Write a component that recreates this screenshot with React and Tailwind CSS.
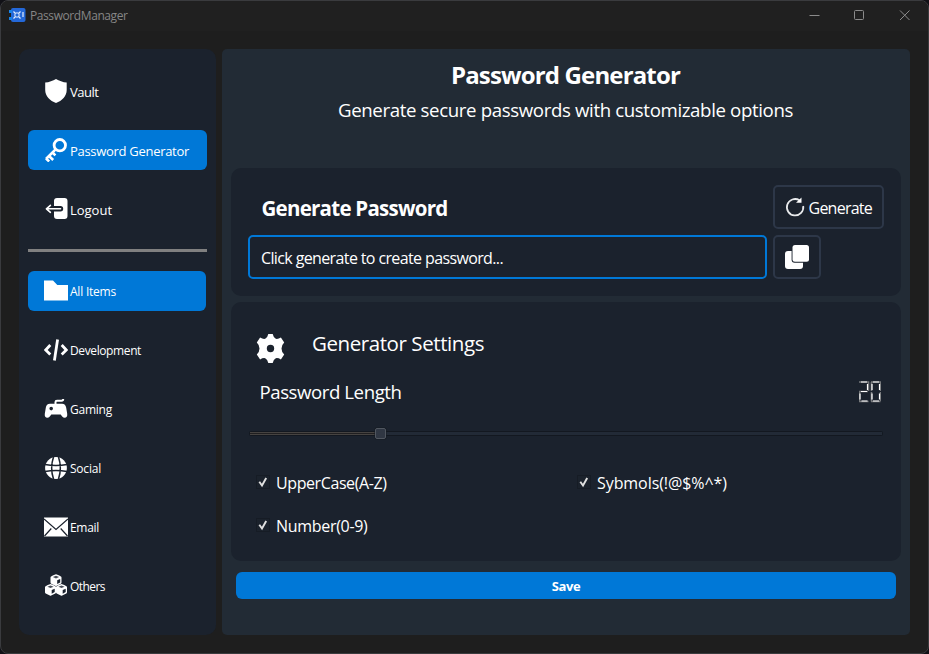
import { useLayoutEffect, useRef, useState } from "react";

// Text that spreads its letter spacing so the line fills a fixed width.
function Fit({ w, className = "", children }) {
  const ref = useRef(null);
  const [ls, setLs] = useState(0);
  useLayoutEffect(() => {
    const el = ref.current;
    const n = el.textContent.length;
    el.style.letterSpacing = "0px";
    const v = (w - el.getBoundingClientRect().width) / n;
    el.style.letterSpacing = v + "px";
    setLs(v);
  }, [w]);
  return (
    <span ref={ref} style={{ letterSpacing: ls + "px" }} className={"inline-block shrink-0 whitespace-pre " + className}>
      {children}
    </span>
  );
}

const Svg = ({ children, className = "size-6", box = "0 0 24 24" }) => (
  <svg viewBox={box} className={"shrink-0 " + className} fill="white">{children}</svg>
);

const Shield = () => (
  <Svg><path d="M12 0C15 1.900 19 3.200 22.700 3.600V11c0 6-4.700 10.800-10.700 13C6 21.800 1.200 17 1.200 11V3.600C5 3.200 9 1.900 12 0z" /></Svg>
);
const Key = () => (
  <Svg>
    <circle cx="15.800" cy="7.200" r="5.700" fill="none" stroke="white" strokeWidth="2.800" />
    <path d="M11.800 11.200L2 21M5 18l4.200 4M2 20.600l3.200 2.800M8.700 14.800l2.700 2.600" fill="none" stroke="white" strokeWidth="2.600" />
  </Svg>
);
const Logout = () => (
  <Svg>
    <path d="M13 1h7.500a3 3 0 013 3v15a3 3 0 01-3 3H13a3 3 0 01-3-3v-4.500h6.500a2.700 2.700 0 000-5.400H10V4a3 3 0 013-3z" />
    <path d="M16.500 11.800H2.600M6.400 8.300L2.400 11.800l4 3.500" fill="none" stroke="white" strokeWidth="1.600" strokeLinecap="round" strokeLinejoin="round" />
  </Svg>
);
const Folder = () => (
  <Svg><path d="M0 1.500h9L13.300 6H24v15.500H0z" /></Svg>
);
const Code = () => (
  <Svg>
    <path d="M6.300 7L1.700 12l4.600 4.500M17.700 7l4.600 5-4.600 4.500" fill="none" stroke="white" strokeWidth="2.800" />
    <path d="M13.600 1.500L10.400 22.500" stroke="white" strokeWidth="2.800" />
  </Svg>
);
const Gamepad = () => (
  <Svg>
    <path d="M11.500 7V5Q11.500 3.700 13 3.700H17.500q1.700 0 1.700-1.700" fill="none" stroke="white" strokeWidth="2" />
    <path fillRule="evenodd" d="M6 6.800h12c2.500 0 3.700 1.500 4.200 4l1 6c.4 2.500-.8 3.900-2.500 3.900-2 0-2.700-1.300-4-3.200H7.300c-1.300 1.900-2 3.200-4 3.200-1.700 0-2.900-1.400-2.500-3.900l1-6c.5-2.500 1.700-4 4.200-4zM7.200 9.800a1.800 1.800 0 100 3.600 1.800 1.800 0 000-3.600z" />
  </Svg>
);
const Globe = () => (
  <Svg>
    <circle cx="12" cy="12" r="10.900" />
    <path d="M9.500 1Q5.800 12 9.500 23M14.500 1Q18.200 12 14.500 23M1 8.500Q12 10.700 23 8.500M1 15.500Q12 13.500 23 15.500" fill="none" stroke="#1b222d" strokeWidth="1.500" />
  </Svg>
);
const Mail = () => (
  <Svg>
    <path d="M0 2.500h24v19H0z" />
    <path d="M0 4l12 10.500L24 4M.5 21l6.800-7.500M23.500 21l-6.800-7.500" fill="none" stroke="#1b222d" strokeWidth="1.200" />
  </Svg>
);
const Cube = ({ x, y }) => (
  <g transform={`translate(${x} ${y})`}>
    <path d="M5.500 0Q6 0 10 1.900 11 2.400 11 3.200V8.200Q11 9 10.300 9.400L6.200 11.500Q5.500 11.900 4.800 11.500L.7 9.400Q0 9 0 8.200V3.200Q0 2.400 1 1.900 5 0 5.500 0z" />
    <path d="M5.500 1.500L8.600 2.800 5.500 4.100 2.400 2.800z" fill="#1b222d" opacity=".8" />
    <path d="M6.700 6L9.700 4.700v3.400L6.700 9.700z" fill="#1b222d" />
  </g>
);
const Cubes = () => (
  <Svg><Cube x={6.500} y={0.300} /><Cube x={1} y={10} /><Cube x={12} y={10} /></Svg>
);
const Gear = () => (
  <Svg className="w-[29px] h-[29px]" box="0 0 29 29">
    <path fillRule="evenodd" d="M12.300 0h4.400q.8 3.800 3.100 4.800 2.200.6 5.100-1.300l3.300 5q-2.700 2.500-2.700 6t2.700 6l-3.300 5q-2.900-1.900-5.100-1.300-2.300 1-3.100 4.800h-4.400q-.8-3.800-3.100-4.800-2.200-.6-5.100 1.300l-3.300-5q2.700-2.500 2.700-6t-2.700-6l3.300-5q2.900 1.900 5.100 1.300 2.300-1 3.100-4.800zM14.500 10.800a3.700 3.700 0 100 7.400 3.700 3.700 0 000-7.400z" />
  </Svg>
);

function NavItem({ icon, label, w, active, small, className = "" }) {
  return (
    <div className={"flex h-10 items-center rounded-md pl-4 text-white " + (active ? "bg-[#0078d7] " : "") + className}>
      {icon}
      <Fit w={w} className={"ml-0.5 pt-0.5 leading-5 " + (small ? "text-[12px]" : "text-[13px]")}>{label}</Fit>
    </div>
  );
}

function Check({ label, w }) {
  return (
    <div className="flex h-5 items-center">
      <svg viewBox="0 0 14 14" className="-mt-0.5 size-3.5 shrink-0">
        <rect x=".5" y=".5" width="13" height="13" fill="#1b222c" stroke="#161c25" />
        <path d="M3.300 6.800l2.700 3.700L10.200 3" fill="none" stroke="#e0e0e0" strokeWidth="1.900" />
      </svg>
      <Fit w={w} className="ml-1.5 text-[16px] leading-5">{label}</Fit>
    </div>
  );
}

export default function App() {
  return (
    <div className="h-[654px] w-[929px] overflow-hidden bg-[#111116] font-['Open_Sans','Noto_Sans',sans-serif] text-white">
      <div className="flex h-full flex-col overflow-hidden rounded-lg border border-[#3a3b3e] bg-[#1e1e1e]">
        <header className="flex h-[30px] shrink-0 items-center bg-[#202020] pl-2 pr-[17px]">
          <svg viewBox="0 0 17 15" className="-mt-px h-[15px] w-[17px]">
            <rect x="2" y="0" width="14.500" height="14" rx="2" fill="#2468d8" />
            <path d="M0 2h3v3H0zM0 9h3v3H0z" fill="#1783ea" />
            <path d="M4.500 3.500l7 7M11.500 3.500l-7 7M14 4v5" stroke="#e4efff" strokeWidth="1.200" />
            <circle cx="8" cy="7" r="2.200" fill="#2468d8" stroke="#e4efff" />
          </svg>
          <Fit w={97.500} className="ml-1 text-[12px] leading-5 text-[#868686]">PasswordManager</Fit>
          <svg viewBox="0 0 102 12" className="-mt-0.5 ml-auto h-3 w-[102px]" fill="none" stroke="#8b8b8b">
            <path d="M.5 6.500h10M91 1.500l9.500 9.500M100.500 1.500L91 11" />
            <rect x="45.500" y="1.500" width="9" height="9" rx="1" />
          </svg>
        </header>

        <div className="flex gap-1.5 pl-[18px] pt-[18px]">
          <aside className="flex h-[586px] w-[197px] flex-col rounded-[10px] bg-[#1b222d] pl-[9px] pr-[9px] pt-[22px]">
            <nav className="flex flex-col gap-[19px]">
              <NavItem icon={<Shield />} label="Vault" w={28.500} />
              <NavItem icon={<Key />} label="Password Generator" w={119} active />
              <NavItem icon={<Logout />} label="Logout" w={42} />
            </nav>
            <div className="mb-[19px] mt-5 h-[3px] bg-[#808080]" />
            <nav className="flex flex-col gap-[19px]">
              <NavItem small icon={<Folder />} label="All Items" w={46} active className="mr-px" />
              <NavItem small icon={<Code />} label="Development" w={71} />
              <NavItem small icon={<Gamepad />} label="Gaming" w={42} />
              <NavItem small icon={<Globe />} label="Social" w={31} />
              <NavItem small icon={<Mail />} label="Email" w={29} />
              <NavItem small icon={<Cubes />} label="Others" w={35} />
            </nav>
          </aside>

          <main className="flex h-[586px] w-[688px] flex-col rounded-[5px] bg-[#222b35] px-[9px] pt-[10px]">
            <h1 className="pr-px text-center text-[24px] font-bold leading-8"><Fit w={229}>Password Generator</Fit></h1>
            <p className="mt-[5px] pr-px text-center text-[18.670px] leading-7"><Fit w={455}>Generate secure passwords with customizable options</Fit></p>

            <section className="mt-[44px] flex h-32 flex-col gap-1.5 rounded-[10px] bg-[#1b222d] px-[17px] pt-[17px]">
              <div className="flex h-11 items-center justify-between">
                <Fit w={186} className="ml-[13.500px] pt-0.5 text-[20.500px] font-bold leading-6">Generate Password</Fit>
                <button className="flex h-11 w-[111px] items-center rounded-[5px] border-2 border-[#2d3748] pl-[10px]">
                  <svg viewBox="0 0 20 20" className="size-5" fill="none">
                    <path d="M14.500 3.300A8.200 8.200 0 1018.200 9" stroke="#e8eaec" strokeWidth="1.800" />
                    <path d="M16.500.500V5.800H11z" fill="white" />
                  </svg>
                  <Fit w={63.500} className="ml-[3.500px] pt-0.5 text-[16px] leading-5">Generate</Fit>
                </button>
              </div>
              <div className="flex gap-1.5">
                <div className="flex h-11 w-[519px] items-center rounded-[5px] border-2 border-[#0078d7] pl-[11px]">
                  <Fit w={242} className="pt-0.5 text-[16px] leading-5">Click generate to create password...</Fit>
                </div>
                <button className="flex h-11 w-12 items-center justify-center rounded-[5px] border-2 border-[#2d3748]">
                  <Svg>
                    <rect x="0" y="6" width="18" height="18" rx="3" />
                    <rect x="6.600" y="-1" width="18.400" height="18.800" rx="3" fill="#1b222d" />
                    <rect x="7.500" y="0" width="16.500" height="16.800" rx="2.500" />
                  </Svg>
                </button>
              </div>
            </section>

            <section className="mt-1.5 flex h-[259px] flex-col rounded-[10px] bg-[#1b222d] pl-[18px] pr-[18px] pt-8">
              <div className="flex h-[29px] pl-[7px]">
                <Gear />
                <Fit w={172} className="ml-[27px] text-[20.500px] leading-[19px]">Generator Settings</Fit>
              </div>
              <div className="mt-[17px] flex h-6 items-center justify-between pl-[10.500px] pr-0.5">
                <Fit w={142} className="text-[18.670px] leading-6">Password Length</Fit>
                <svg viewBox="0 0 22 22" className="h-[22px] w-[22px]" fill="none">
                  <path d="M0 1h9.500v9M0 10.500h9M.5 11v9.500M0 20.500h9.500M12.500 1v9M12.500 11v9.500M21.500 1v9M21.500 11v9M12 1h10M12 20.500h9.500" stroke="#77797c" strokeWidth="1.600" />
                  <path d="M2 1h6M8.500 3v6M2 10.500h6M1 12.500v6M2.500 20h6M14 1h6M13 3v6M20.500 3v6M13 12.500v6M20.500 12.500v6M14 20h6" stroke="white" strokeWidth="1.200" />
                </svg>
              </div>
              <svg viewBox="0 0 634 13" className="mt-[23px] h-[13px] w-[634px] shrink-0">
                <rect x=".5" y="4.500" width="633" height="4" rx="1" fill="#222a36" stroke="#131820" />
                <path d="M1 5.500h126M1 7.500h126" stroke="#464341" />
                <path d="M1 6.500h126" stroke="#201f20" />
                <rect x="125.500" y=".5" width="12" height="12" rx="2" fill="#151a22" />
                <rect x="126.500" y="1.500" width="10" height="10" rx="1.500" fill="#303743" stroke="#515760" />
              </svg>
              <div className="mt-[33px] grid grid-cols-[321px_1fr] gap-y-[23px] pl-[7px]">
                <Check label="UpperCase(A-Z)" w={110.500} />
                <Check label="Sybmols(!@$%^*)" w={130} />
                <Check label="Number(0-9)" w={91.500} />
              </div>
            </section>

            <button className="mx-[5px] mt-[11px] flex h-[27px] shrink-0 items-center justify-center rounded-md bg-[#0078d7] text-[13px] font-bold leading-5">
              <Fit w={28.500}>Save</Fit>
            </button>
          </main>
        </div>
      </div>
    </div>
  );
}
